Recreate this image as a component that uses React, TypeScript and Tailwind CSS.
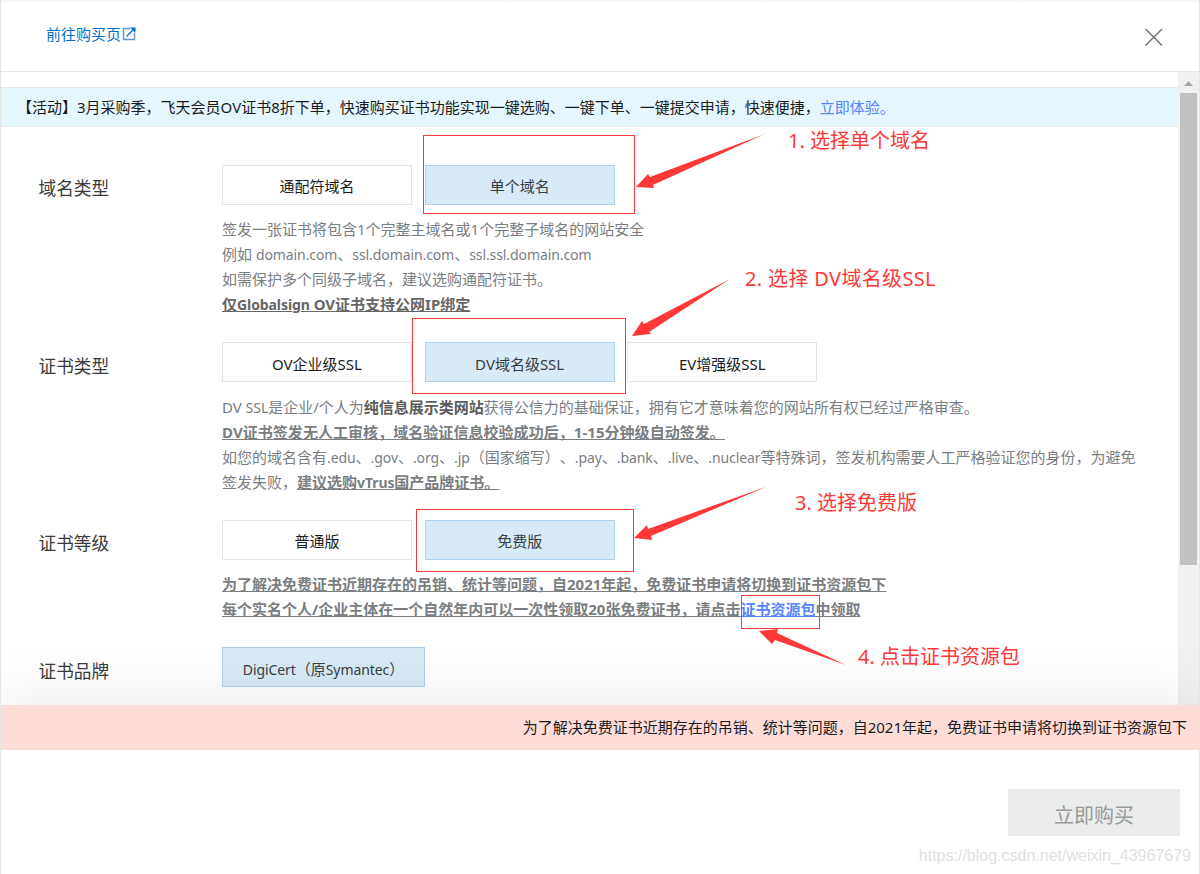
import { ReactNode } from "react";
import clsx from "clsx";

interface OptionProps {
    active?: boolean;
    wide?: boolean;
    children: ReactNode;
}

const Option = ({ active, wide, children }: OptionProps) => {
    return (
        <button
            type="button"
            className={clsx(
                "h-10 shrink-0 border text-[15px] leading-6 whitespace-nowrap",
                wide ? "w-[203px] pt-1" : "w-[190px] pt-[2.6px]",
                active
                    ? "border-[#aed2ee] bg-[#d8eaf6] text-[#3a3d40]"
                    : "border-[#e3e4e6] bg-white text-[#1a1a1a]"
            )}
        >
            {children}
        </button>
    );
};

// latin words sit a bit smaller next to the chinese text
const En = ({ children }: { children: ReactNode }) => (
    <span className="text-[14px] tracking-[-0.09px]">{children}</span>
);

interface FieldProps {
    label: string;
    options: ReactNode;
    children?: ReactNode;
}

const Field = ({ label, options, children }: FieldProps) => {
    return (
        <div className="flex pl-[37.5px]">
            <div className="w-[183.5px] shrink-0 pt-[11.3px] text-[17.67px] leading-6 text-[#3a3a3a]">
                {label}
            </div>
            <div className="mb-[25px]">
                <div className="flex gap-[12.67px]">{options}</div>
                {children && (
                    <div className="mt-[12.5px] text-[15px] leading-[25px] whitespace-nowrap text-[#7a7e81] *:h-[25px]">
                        {children}
                    </div>
                )}
            </div>
        </div>
    );
};

interface ArrowProps {
    className: string;
    width: number;
    height: number;
    points: string;
}

const Arrow = ({ className, width, height, points }: ArrowProps) => (
    <svg
        className={clsx("absolute", className)}
        width={width}
        height={height}
        viewBox={`0 0 ${width} ${height}`}
    >
        <polygon points={points} fill="#fc3938" />
    </svg>
);

const Annotations = () => {
    return (
        <div className="pointer-events-none absolute inset-y-0 -left-px z-20 w-[1200px] text-[20px] leading-7 whitespace-nowrap text-[#fc3938]">
            <div className="absolute top-[135px] left-[423px] h-[79px] w-[212px] border border-[#f93a3a]" />
            <div className="absolute top-[318px] left-[412px] h-[76px] w-[214px] border border-[#f93a3a]" />
            <div className="absolute top-[509px] left-[416px] h-[63px] w-[218px] border border-[#f93a3a]" />
            <div className="absolute top-[595px] left-[741px] h-[34px] w-[79px] border border-[#f93a3a]" />

            <Arrow
                className="top-[133px] left-[636px]"
                width={132}
                height={56}
                points="0,54 12,41 14,44 131,0 17,52 18,55"
            />
            <Arrow
                className="top-[279px] left-[632px]"
                width={99}
                height={58}
                points="0,57 10,42 12,45 98,0 17,53 19,55"
            />
            <Arrow
                className="top-[486px] left-[634px]"
                width={135}
                height={54}
                points="0,52 13,39 14,43 134,0 17,50 18,54"
            />
            <Arrow
                className="top-[628px] left-[759px]"
                width={88}
                height={38}
                points="0,3 19,1 18,5 87,37 16,12 13,16"
            />

            <span className="absolute top-[127px] left-[788px]">1. 选择单个域名</span>
            <span className="absolute top-[265px] left-[745px] tracking-[0.35px]">
                2. 选择 DV域名级SSL
            </span>
            <span className="absolute top-[489px] left-[795px]">3. 选择免费版</span>
            <span className="absolute top-[643px] left-[858px]">4. 点击证书资源包</span>
        </div>
    );
};

const App = () => {
    return (
        <div
            lang="zh-CN"
            className="relative flex h-[874px] w-[1200px] flex-col overflow-hidden border-x border-[#e6e6e6] bg-white font-['Noto_Sans','Noto_Sans_CJK_SC',sans-serif] [text-spacing-trim:space-all]"
        >
            <header className="flex h-[72px] shrink-0 items-start justify-between border-b border-[#e8e8e8] bg-linear-to-b from-[#f3f3f3] to-white to-[3px] pl-[45px]">
                <a className="mt-[22px] flex items-center text-[15px] leading-6 text-[#0070cc]">
                    前往购买页
                    <svg className="ml-px" width="14" height="14" viewBox="0 0 14 14" fill="none">
                        <path d="M8 1.5H1.5v11h11V6" stroke="#5b97d6" strokeWidth="1.4" />
                        <path d="M4.5 9.5 11 3" stroke="#0070cc" strokeWidth="1.3" />
                        <path d="M8 .5h5.5V6z" fill="#0070cc" />
                    </svg>
                </a>
                <svg className="mt-7 mr-9" width="19" height="19" viewBox="0 0 19 19">
                    <path d="M1.5 1 18 17.5M18 1 1.5 17.5" stroke="#6e6e6e" strokeWidth="1.4" />
                </svg>
            </header>

            <main className="flex h-[633px] shrink-0">
                <div className="min-w-0 flex-1 overflow-hidden pt-[15px]">
                    <div className="mb-[37.8px] flex h-10 items-center border-y border-[#e6e8ea] bg-[#e5f6ff] pl-4 text-[15px] whitespace-nowrap text-[#1a1a1a]">
                        【活动】3月采购季&#65292;飞天会员OV证书8折下单&#65292;快速购买证书功能实现一键选购、一键下单、一键提交申请&#65292;快速便捷&#65292;
                        <a className="text-[#5584ff]">立即体验。</a>
                    </div>

                    <Field
                        label="域名类型"
                        options={
                            <>
                                <Option>通配符域名</Option>
                                <Option active>单个域名</Option>
                            </>
                        }
                    >
                        <p>签发一张证书将包含1个完整主域名或1个完整子域名的网站安全</p>
                        <p>
                            例如 <En>domain.com</En>、<En>ssl.domain.com</En>、
                            <En>ssl.ssl.domain.com</En>
                        </p>
                        <p>如需保护多个同级子域名&#65292;建议选购通配符证书。</p>
                        <p className="font-bold text-[#666] underline">
                            仅<En>Globalsign</En> OV证书支持公网IP绑定
                        </p>
                    </Field>

                    <Field
                        label="证书类型"
                        options={
                            <>
                                <Option>OV企业级SSL</Option>
                                <Option active>DV域名级SSL</Option>
                                <Option>EV增强级SSL</Option>
                            </>
                        }
                    >
                        <p>
                            DV <En>SSL</En>是企业/个人为
                            <b className="text-[#5c5c5c]">纯信息展示类网站</b>
                            获得公信力的基础保证&#65292;拥有它才意味着您的网站所有权已经过严格审查。
                        </p>
                        <p className="font-bold tracking-[0.05px] underline">
                            DV证书签发无人工审核&#65292;域名验证信息校验成功后&#65292;1-15分钟级自动签发。
                        </p>
                        <p>
                            如您的域名含有<En>.edu</En>、<En>.gov</En>、<En>.org</En>、
                            <En>.jp</En>&#65288;国家缩写&#65289;、<En>.pay</En>、<En>.bank</En>、
                            <En>.live</En>、<En>.nuclear</En>
                            等特殊词&#65292;签发机构需要人工严格验证您的身份&#65292;为避免
                        </p>
                        <p>
                            签发失败&#65292;
                            <b className="underline">
                                建议选购<En>vTrus</En>国产品牌证书。
                            </b>
                        </p>
                    </Field>

                    <Field
                        label="证书等级"
                        options={
                            <>
                                <Option>普通版</Option>
                                <Option active>免费版</Option>
                            </>
                        }
                    >
                        <p className="font-bold underline">
                            为了解决免费证书近期存在的吊销、统计等问题&#65292;自2021年起&#65292;免费证书申请将切换到证书资源包下
                        </p>
                        <p className="font-bold underline">
                            每个实名个人/企业主体在一个自然年内可以一次性领取20张免费证书&#65292;请点击
                            <a className="text-[#5584ff] underline">证书资源包</a>
                            中领取
                        </p>
                    </Field>

                    <Field
                        label="证书品牌"
                        options={
                            <Option active wide>
                                <En>DigiCert</En>&#65288;原<En>Symantec</En>&#65289;
                            </Option>
                        }
                    />
                </div>

                <div className="flex w-[21px] shrink-0 flex-col bg-[#f1f1f1] pl-0.5">
                    <svg className="mt-[9px] ml-1" width="9" height="5" viewBox="0 0 9 5">
                        <path d="M0 5 4.5 0 9 5z" fill="#a3a3a3" />
                    </svg>
                    <div className="mt-[7px] h-[472px] w-[17px] bg-[#c1c1c1]" />
                </div>
            </main>

            <footer className="relative z-10 flex-1 bg-white shadow-[0_0_70px_rgba(0,0,0,0.1)]">
                <div className="flex h-[45px] items-center justify-end bg-[#ffdcd8] pr-3 text-[15px] whitespace-nowrap text-[#1a1a1a]">
                    为了解决免费证书近期存在的吊销、统计等问题&#65292;自2021年起&#65292;免费证书申请将切换到证书资源包下
                </div>
                <div className="flex justify-end pt-[39px] pr-[19px]">
                    <button
                        type="button"
                        disabled
                        className="h-[47px] w-[172px] bg-[#ebecec] pt-1.5 text-[20px] text-[#999]"
                    >
                        立即购买
                    </button>
                </div>
            </footer>

            <Annotations />
            <span className="absolute top-[844px] right-[8px] z-20 font-['Liberation_Sans',sans-serif] text-[16px] leading-6 text-[#e0e0e0]">
                https://blog.csdn.net/weixin_43967679
            </span>
        </div>
    );
};

export default App;
